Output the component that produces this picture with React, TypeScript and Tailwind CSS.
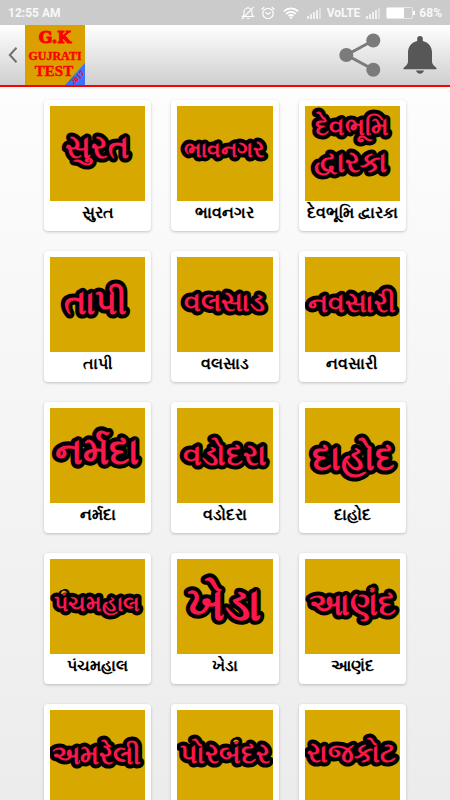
import React from 'react';

type Line = { text: string; size: number; y: number; x?: number };
type Tile = { name: string; art: Line[] };

const tiles: Tile[] = [
  { name: 'સુરત', art: [{ text: 'સુરત', size: 32, y: 51, x: 46 }] },
  { name: 'ભાવનગર', art: [{ text: 'ભાવનગર', size: 22, y: 50, x: 46 }] },
  {
    name: 'દેવભૂમિ દ્વારકા',
    art: [
      { text: 'દેવભૂમિ', size: 25, y: 29, x: 46 },
      { text: 'દ્વારકા', size: 29, y: 65, x: 45 },
    ],
  },
  { name: 'તાપી', art: [{ text: 'તાપી', size: 34, y: 56, x: 45 }] },
  { name: 'વલસાડ', art: [{ text: 'વલસાડ', size: 27, y: 53 }] },
  { name: 'નવસારી', art: [{ text: 'નવસારી', size: 27, y: 54, x: 46 }] },
  { name: 'નર્મદા', art: [{ text: 'નર્મદા', size: 37, y: 55, x: 46 }] },
  { name: 'વડોદરા', art: [{ text: 'વડોદરા', size: 30, y: 56 }] },
  { name: 'દાહોદ', art: [{ text: 'દાહોદ', size: 35, y: 61, x: 48 }] },
  { name: 'પંચમહાલ', art: [{ text: 'પંચમહાલ', size: 22, y: 51, x: 46 }] },
  { name: 'ખેડા', art: [{ text: 'ખેડા', size: 46, y: 60, x: 46 }] },
  { name: 'આણંદ', art: [{ text: 'આણંદ', size: 32, y: 55 }] },
  { name: 'અમરેલી', art: [{ text: 'અમરેલી', size: 27, y: 53, x: 46 }] },
  { name: 'પોરબંદર', art: [{ text: 'પોરબંદર', size: 27, y: 52 }] },
  { name: 'રાજકોટ', art: [{ text: 'રાજકોટ', size: 27, y: 51, x: 46 }] },
];

function Signal() {
  return (
    <svg width="14" height="12" viewBox="0 0 14 12" fill="#fff" aria-hidden="true">
      {[0, 1, 2, 3, 4].map((i) => (
        <rect key={i} x={i * 3} y={9 - i * 2} width="2" height={3 + i * 2} opacity={i === 4 ? 0.4 : 0.7} />
      ))}
    </svg>
  );
}

function StatusBar() {
  return (
    <div className="flex h-[25px] shrink-0 items-center justify-between bg-[#cbcbcb] px-2 text-xs leading-4 font-bold text-[#f8f8f8]">
      <span>12:55 AM</span>
      <div className="flex items-center">
        <svg className="mr-1.5" width="14" height="14" viewBox="0 0 14 14" fill="none" stroke="#fff" strokeWidth="1.1" aria-hidden="true">
          <path d="M1.5 10.5h11L11 9V6a4 4 0 0 0-8 0v3zM6 12.5h2.5M7 2V.8M1 13.2 12.7.8" />
        </svg>
        <svg className="mr-2" width="14" height="14" viewBox="0 0 14 14" fill="none" stroke="#fff" strokeWidth="1.2" aria-hidden="true">
          <circle cx="7" cy="7.5" r="5.2" />
          <path d="m4.7 6.3 2.3 2 2.7-1.8M.6 3.5 3.2 1.2M13.4 3.5l-2.6-2.3" />
        </svg>
        <svg className="mr-2" width="16" height="12" viewBox="0 0 16 12" fill="none" stroke="#fff" strokeWidth="1.7" aria-hidden="true">
          <path d="M.8 4.3a10.500 10.500 0 0 1 14.400 0M3.200 6.800a7 7 0 0 1 9.600 0M5.500 9a3.800 3.800 0 0 1 5 0" />
          <path d="M8 9.200 9.500 10.500 8 12 6.500 10.500z" fill="#fff" stroke="none" />
        </svg>
        <Signal />
        <span className="mx-1.5">VoLTE</span>
        <Signal />
        <svg className="mr-1 ml-1.5" width="29" height="12" viewBox="0 0 29 12" aria-hidden="true">
          <rect x=".5" y=".5" width="26" height="11" rx="1" fill="none" stroke="#e8e8e8" />
          <rect x="1" y="1" width="17" height="10" fill="#fff" />
          <rect x="27" y="4" width="2" height="4" fill="#fff" />
        </svg>
        <span>68%</span>
      </div>
    </div>
  );
}

function Logo() {
  return (
    <svg width="60" height="60" viewBox="0 0 60 60" role="img" aria-label="G.K Gujrati Test" fontFamily="'Liberation Serif', serif" fontWeight="700" fill="#f00" textAnchor="middle">
      <rect width="60" height="60" fill="#d9a000" />
      <text x="30" y="18" fontSize="16" fontFamily="'DejaVu Serif', serif" stroke="#f00" strokeWidth="1">G.K</text>
      <text x="30" y="35" fontSize="12" stroke="#f00" strokeWidth=".4">GUJRATI</text>
      <text x="29" y="51" fontSize="15" stroke="#f00" strokeWidth=".4">TEST</text>
      <path d="M60 38v22H40z" fill="#3474ff" />
      <text x="53" y="55" fontSize="8" transform="rotate(-45 53 53)">2017</text>
    </svg>
  );
}

function Header() {
  return (
    <header className="flex h-[62px] shrink-0 items-center border-b-2 border-[#f00] bg-linear-to-b from-white to-[#cfcfcf]">
      <button aria-label="Back" className="flex h-full w-[25px] items-center justify-center">
        <svg width="10" height="16" viewBox="0 0 10 16" fill="none" stroke="#707070" strokeWidth="2" aria-hidden="true">
          <path d="M8.500.8 1.800 8l6.700 7.200" />
        </svg>
      </button>
      <Logo />
      <div className="ml-auto flex items-center gap-[22px] pr-[13px]">
        <button aria-label="Share">
          <svg width="42" height="44" viewBox="0 0 42 44" fill="#7b7b7b" aria-hidden="true">
            <path d="M34.300 7.500 7.500 22l26.800 14.500" fill="none" stroke="#7b7b7b" strokeWidth="3" />
            <circle cx="34.300" cy="7.500" r="7" />
            <circle cx="7.300" cy="22" r="7" />
            <circle cx="34.300" cy="36.800" r="7" />
          </svg>
        </button>
        <button aria-label="Notifications">
          <svg width="34" height="38" viewBox="0 0 34 38" fill="#575757" aria-hidden="true">
            <path d="M14.200 5V2.800a2.800 2.800 0 0 1 5.600 0V5c5.700 1.300 9.200 5.800 9.200 11.500v9c0 2 1 3.200 2.300 4.500l2.200 2v1.200H.5V32l2.200-2C4 28.700 5 27.500 5 25.500v-9C5 10.800 8.500 6.300 14.200 5zM13 34.500h8c-.5 2-2 3.200-4 3.200s-3.500-1.200-4-3.200z" />
          </svg>
        </button>
      </div>
    </header>
  );
}

function TileArt({ lines }: { lines: Line[] }) {
  return (
    <svg
      viewBox="0 0 94 94"
      aria-hidden="true"
      className="block w-full bg-[#d6a800]"
      textAnchor="middle"
      fontWeight="700"
      fill="#f9174b"
      stroke="#000"
      strokeWidth="8"
      strokeLinejoin="round"
      strokeLinecap="round"
      paintOrder="stroke"
    >
      {lines.map((line) => (
        <text key={line.text} x={line.x ?? 47} y={line.y} fontSize={line.size}>
          {line.text}
        </text>
      ))}
    </svg>
  );
}

function TileCard({ tile }: { tile: Tile }) {
  return (
    <li>
      <button className="flex h-[131px] w-full flex-col rounded-[4px] bg-white p-1.5 shadow-[0_1px_3px_rgba(0,0,0,0.22)]">
        <TileArt lines={tile.art} />
        <span className="flex w-full justify-center text-base leading-6 font-bold whitespace-nowrap text-black">{tile.name}</span>
      </button>
    </li>
  );
}

export default function App() {
  return (
    <div className="flex h-screen flex-col bg-linear-to-b from-white to-[#ececec] font-[Roboto,'Noto_Sans',sans-serif]">
      <StatusBar />
      <Header />
      <main className="min-h-0 flex-1 overflow-y-auto px-11 py-[13px] [scrollbar-width:none]">
        <ul className="grid grid-cols-3 gap-5">
          {tiles.map((tile) => (
            <TileCard key={tile.name} tile={tile} />
          ))}
        </ul>
      </main>
    </div>
  );
}
